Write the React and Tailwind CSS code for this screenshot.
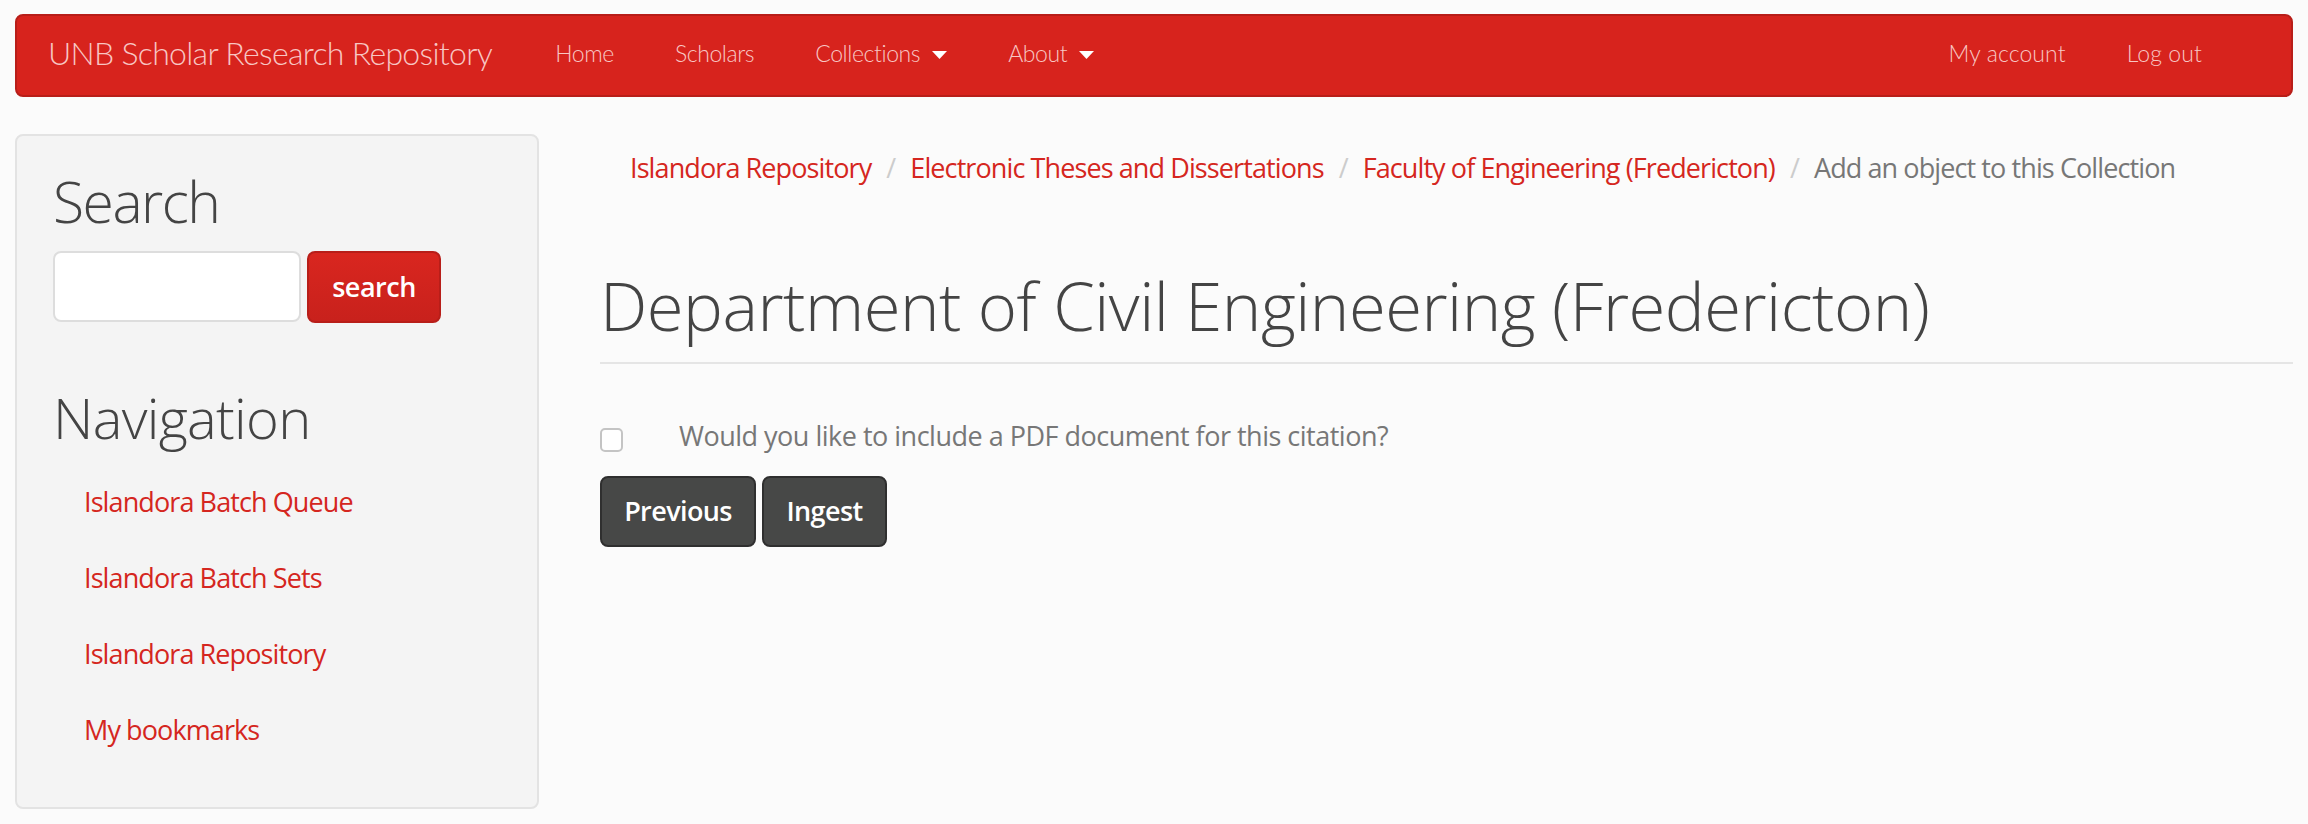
import React from "react";

function Caret() {
  return (
    <svg width="15" height="8" viewBox="0 0 15 8" className="ml-[12px] mt-[2px]">
      <path d="M0 0 L15 0 L7.5 8 Z" fill="#ffffff" />
    </svg>
  );
}

function NavLink({ children, caret, wide }) {
  return (
    <a
      className={
        wide
          ? "flex items-center text-[23px] leading-none text-[#f8c6c3] font-['Lato'] font-light tracking-[0.1px]"
          : "flex items-center text-[23px] leading-none text-[#f8c6c3] font-['Lato'] font-light tracking-[-0.4px]"
      }
    >
      <span>{children}</span>
      {caret && <Caret />}
    </a>
  );
}

function Crumb({ children }) {
  return <a className="text-[#d52620]">{children}</a>;
}

function Sep() {
  return <span className="text-[#cccccc] px-[15px]">/</span>;
}

export default function App() {
  const links = [
    "Islandora Batch Queue",
    "Islandora Batch Sets",
    "Islandora Repository",
    "My bookmarks",
  ];
  return (
    <div className="min-h-screen bg-[#fbfbfb] font-['Open_Sans'] text-[#444]">
      <div className="px-[15px] pt-[14px]">
        <nav className="h-[83px] flex items-center rounded-[8px] bg-[#d7231d] border-2 border-[#b81e19] pl-[31px] pr-[89px]">
          <a className="font-['Lato'] font-light text-[32px] leading-none tracking-[-0.7px] text-[#f8c6c3] mr-[63px] -mt-[6px]">
            UNB Scholar Research Repository
          </a>
          <div className="flex items-center gap-[61px] -mt-[4px]">
            <NavLink>Home</NavLink>
            <NavLink>Scholars</NavLink>
            <NavLink caret>Collections</NavLink>
            <NavLink caret>About</NavLink>
          </div>
          <div className="ml-auto flex items-center gap-[61px] -mt-[4px]">
            <NavLink wide>My account</NavLink>
            <NavLink wide>Log out</NavLink>
          </div>
        </nav>
      </div>

      <div className="flex px-[15px] mt-[37px]">
        <aside className="w-[524px] shrink-0 rounded-[8px] border-2 border-[#e3e3e3] bg-[#f4f4f4] pl-[36px] pr-[36px] pt-[33px] pb-[39px]">
          <h2 className="text-[57px] leading-[64px] font-light text-[#444] tracking-[-1.5px]">Search</h2>
          <div className="flex mt-[18px] gap-[6px]">
            <input
              type="text"
              className="w-[248px] h-[71px] bg-white border-2 border-[#dddddd] rounded-[8px] outline-none"
            />
            <button className="w-[134px] h-[72px] rounded-[8px] border-2 border-[#b81e19] bg-gradient-to-b from-[#d9261f] to-[#c8211c] text-white text-[27px] font-semibold tracking-[-0.5px]">
              search
            </button>
          </div>
          <h2 className="mt-[63px] text-[56px] leading-[62px] font-light text-[#444] tracking-[-0.7px]">Navigation</h2>
          <ul className="mt-[16px] pl-[31px]">
            {links.map((l) => (
              <li key={l} className="text-[27px] leading-[76px] text-[#d52620] tracking-[-0.9px]">
                {l}
              </li>
            ))}
          </ul>
        </aside>

        <main className="ml-[61px] flex-1 min-w-0">
          <div className="mt-[14px] pl-[30px] text-[27px] leading-[40px] tracking-[-0.9px] flex">
            <Crumb>Islandora Repository</Crumb>
            <Sep />
            <Crumb>Electronic Theses and Dissertations</Crumb>
            <Sep />
            <Crumb>Faculty of Engineering (Fredericton)</Crumb>
            <Sep />
            <span className="text-[#777777]">Add an object to this Collection</span>
          </div>

          <h1 className="mt-[80px] text-[67px] leading-[74px] font-light text-[#444] pb-[20px] border-b-2 border-[#e5e5e5] tracking-[-0.5px]">
            Department of Civil Engineering (Fredericton)
          </h1>

          <div className="mt-[52px] flex items-start">
            <input
              type="checkbox"
              className="appearance-none w-[23px] h-[24px] mt-[12px] rounded-[5px] border-2 border-[#c4c4c4] bg-white"
            />
            <span className="ml-[56px] text-[27px] leading-[40px] text-[#777777] tracking-[-0.5px]">
              Would you like to include a PDF document for this citation?
            </span>
          </div>

          <div className="mt-[20px] flex gap-[6px]">
            <button className="w-[156px] h-[71px] rounded-[8px] border-2 border-[#2f2f2f] bg-[#474847] text-white text-[27px] font-semibold tracking-[-0.6px]">
              Previous
            </button>
            <button className="w-[125px] h-[71px] rounded-[8px] border-2 border-[#2f2f2f] bg-[#474847] text-white text-[27px] font-semibold tracking-[-0.6px]">
              Ingest
            </button>
          </div>
        </main>
      </div>
    </div>
  );
}
